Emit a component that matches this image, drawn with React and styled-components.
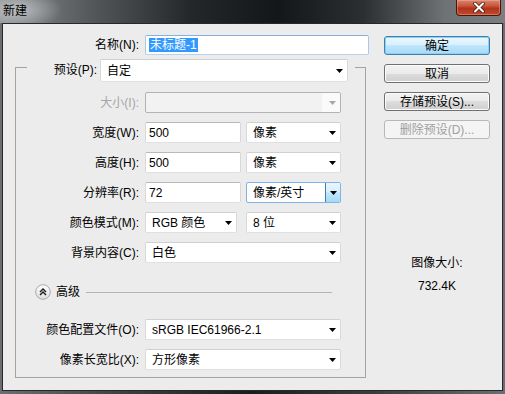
import React from "react";
import styled, { createGlobalStyle } from "styled-components";

const GlobalStyle = createGlobalStyle`
  html, body { margin: 0; padding: 0; background: #1b1e21; }
  body {
    font-family: "Liberation Sans", "Noto Sans CJK SC", sans-serif;
    font-size: 12px;
    color: #000;
  }
`;

const Window = styled.div`
  width: 505px;
  height: 394px;
  display: flex;
  flex-direction: column;
  background: linear-gradient(90deg, #6c6f72 0%, #3c3f42 25%, #1a1d20 50%, #3c3f42 75%, #6c6f72 100%);
`;

const TitleBar = styled.div`
  height: 23px;
  flex-shrink: 0;
  display: flex;
  justify-content: space-between;
  align-items: flex-start;
  background:
    radial-gradient(ellipse 46px 20px at 16px 10px, rgba(200, 202, 204, 0.85), rgba(200, 202, 204, 0) 100%),
    linear-gradient(90deg, #8a8d90 0%, #55585b 18%, #24272a 38%, #14171a 55%, #2c2f32 72%, #6f7275 88%, #7c7f82 100%);
`;

const Title = styled.div`
  margin: 3px 0 0 3px;
  line-height: 14px;
  font-family: "Noto Sans CJK SC", sans-serif;
  color: #000;
`;

const CloseButton = styled.div`
  width: 45px;
  height: 16px;
  margin-right: 4px;
  box-sizing: border-box;
  border: 1px solid #4a1408;
  border-top: none;
  border-radius: 0 0 4px 4px;
  display: flex;
  align-items: center;
  justify-content: center;
  background: linear-gradient(#d8866f 0%, #c9553a 40%, #b0321a 55%, #c24b2e 100%);
  box-shadow: inset 0 0 0 1px rgba(255, 200, 180, 0.35);
`;

const Frame = styled.div`
  flex: 1;
  display: flex;
  padding: 0 2px 3px 2px;
`;

const Client = styled.div`
  flex: 1;
  display: flex;
  border: 1px solid #26292c;
  background: #ececec;
`;

const LeftColumn = styled.div`
  width: 363px;
  flex-shrink: 0;
  box-sizing: border-box;
  padding: 11px 0 0 12px;
  display: flex;
  flex-direction: column;
`;

const Row = styled.div`
  display: flex;
  align-items: center;
  height: 21px;
  flex-shrink: 0;
  margin-top: ${(p) => p.$mt ?? 9}px;
`;

const Label = styled.div`
  width: ${(p) => p.$w}px;
  flex-shrink: 0;
  box-sizing: border-box;
  padding-right: ${(p) => p.$pr ?? 6}px;
  text-align: right;
  white-space: nowrap;
  line-height: 16px;
  color: ${(p) => (p.$disabled ? "#a6a6a6" : "#000")};
`;

const TextBox = styled.div`
  width: ${(p) => p.$w}px;
  height: ${(p) => p.$h ?? 21}px;
  flex-shrink: 0;
  box-sizing: border-box;
  background: #fff;
  border: 1px solid;
  border-color: ${(p) => (p.$focus ? "#86b1dc #a9c8e8 #b7d2ee #a9c8e8" : "#b9b9b9 #d8d8d8 #e0e0e0 #d8d8d8")};
  border-radius: 2px;
  padding-left: 3px;
  display: flex;
  align-items: center;
  white-space: nowrap;
`;

const Selected = styled.span`
  background: #3399ff;
  color: #fff;
  line-height: 14px;
  padding: 0 1px;
`;

const Select = styled.div`
  width: ${(p) => p.$w}px;
  height: 21px;
  flex-shrink: 0;
  box-sizing: border-box;
  background: ${(p) => (p.$disabled ? "#f2f2f2" : "#fff")};
  border: 1px solid;
  border-color: ${(p) =>
    p.$focus ? "#7eb4ea" : p.$disabled ? "#b3b3b3" : "#d0d0d0 #d9d9d9 #e0e0e0 #d9d9d9"};
  border-radius: 2px;
  padding-left: 6px;
  display: flex;
  align-items: center;
  white-space: nowrap;
  overflow: hidden;
`;

const SelectText = styled.span`
  flex: 1;
  line-height: 16px;
`;

const DropZone = styled.div`
  width: ${(p) => (p.$focus ? 15 : 18)}px;
  height: 100%;
  flex-shrink: 0;
  display: flex;
  align-items: center;
  justify-content: center;
  box-sizing: border-box;
  background: ${(p) =>
    p.$focus
      ? "linear-gradient(#eaf6fd 0%, #d7effc 45%, #bde6fd 55%, #a6d9f4 100%)"
      : p.$disabled
      ? "#fafafa"
      : "transparent"};
  border-left: ${(p) => (p.$focus ? "1px solid #3c7fb1" : "none")};
  padding-left: ${(p) => (p.$focus ? 0 : 2)}px;
`;

const GroupBox = styled.div`
  width: 351px;
  box-sizing: border-box;
  margin-top: 12px;
  border: 1px solid #a3a3a3;
  border-top: none;
  padding-bottom: 7px;
  display: flex;
  flex-direction: column;
`;

const PresetRow = styled.div`
  display: flex;
  align-items: flex-start;
  height: 23px;
  margin-top: -8px;
`;

const Corner = styled.div`
  width: ${(p) => p.$w}px;
  flex: ${(p) => (p.$grow ? 1 : "none")};
  margin-top: 8px;
  margin-left: ${(p) => p.$ml ?? 0}px;
  border-top: 1px solid #a3a3a3;
`;

const PresetLabel = styled(Label)`
  line-height: 23px;
`;

const PresetSelect = styled(Select)`
  height: 23px;
`;

const AdvancedRow = styled.div`
  display: flex;
  align-items: center;
  height: 16px;
  margin: 21px 33px 0 19px;
  gap: 5px;
`;

const AdvancedText = styled.span`
  line-height: 16px;
`;

const Rule = styled.div`
  flex: 1;
  height: 0;
  border-top: 1px solid #b4b4b4;
  margin-left: 1px;
`;

const SideColumn = styled.div`
  width: 106px;
  margin-left: 18px;
  padding-top: 12px;
  display: flex;
  flex-direction: column;
  gap: 9px;
`;

const Button = styled.div`
  height: 19px;
  box-sizing: border-box;
  border: 1px solid ${(p) => (p.$default ? "#3c7fb1" : p.$disabled ? "#b5b9bc" : "#707070")};
  border-radius: 3px;
  display: flex;
  align-items: center;
  justify-content: center;
  white-space: nowrap;
  line-height: 16px;
  color: ${(p) => (p.$disabled ? "#a0a0a0" : "#000")};
  background: ${(p) =>
    p.$default
      ? "linear-gradient(#eaf6fd 0%, #d9f0fc 50%, #bee6fd 50%, #a7d9f5 100%)"
      : p.$disabled
      ? "#f4f4f4"
      : "linear-gradient(#f2f2f2 0%, #ebebeb 50%, #dddddd 50%, #cfcfcf 100%)"};
  box-shadow: ${(p) =>
    p.$default ? "inset 0 0 0 1px #8ed0f3" : p.$disabled ? "none" : "inset 0 0 0 1px #fcfcfc"};
`;

const SizeInfo = styled.div`
  margin-top: 107px;
  display: flex;
  flex-direction: column;
  align-items: center;
  gap: 7px;
  line-height: 16px;
`;

function Arrow({ color = "#000" }) {
  return (
    <svg width="7" height="4" viewBox="0 0 7 4">
      <polygon points="0,0 7,0 3.5,4" fill={color} />
    </svg>
  );
}

function Combo({ w, text, focus, disabled }) {
  return (
    <Select $w={w} $focus={focus} $disabled={disabled}>
      <SelectText>{text}</SelectText>
      <DropZone $focus={focus} $disabled={disabled}>
        <Arrow color={disabled ? "#a8a8a8" : "#000"} />
      </DropZone>
    </Select>
  );
}

function CollapseIcon() {
  return (
    <svg width="16" height="16" viewBox="0 0 16 16">
      <defs>
        <linearGradient id="cg" x1="0" y1="0" x2="0" y2="1">
          <stop offset="0" stopColor="#ffffff" />
          <stop offset="1" stopColor="#dcdcdc" />
        </linearGradient>
      </defs>
      <circle cx="8" cy="8" r="7.3" fill="url(#cg)" stroke="#a9a9a9" />
      <path d="M5 8 L8 5 L11 8 M5 11 L8 8 L11 11" fill="none" stroke="#1a1a1a" strokeWidth="1.4" />
    </svg>
  );
}

export default function App() {
  return (
    <>
      <GlobalStyle />
      <Window>
        <TitleBar>
          <Title>新建</Title>
          <CloseButton>
            <svg width="14" height="11" viewBox="0 0 14 11">
              <path d="M3 1.5 L11 9.5 M11 1.5 L3 9.5" stroke="#4a1a10" strokeWidth="3.6" strokeLinecap="round" />
              <path d="M3 1.5 L11 9.5 M11 1.5 L3 9.5" stroke="#ffffff" strokeWidth="2" strokeLinecap="round" />
            </svg>
          </CloseButton>
        </TitleBar>
        <Frame>
          <Client>
            <LeftColumn>
              <Row $mt={0} style={{ height: 20 }}>
                <Label $w={130}>名称(N):</Label>
                <TextBox $w={224} $h={20} $focus>
                  <Selected>未标题-1</Selected>
                </TextBox>
              </Row>

              <GroupBox>
                <PresetRow>
                  <Corner $w={11} />
                  <PresetLabel $w={73} $pr={3}>预设(P):</PresetLabel>
                  <PresetSelect $w={248}>
                    <SelectText>自定</SelectText>
                    <DropZone>
                      <Arrow />
                    </DropZone>
                  </PresetSelect>
                  <Corner $grow $ml={7} />
                </PresetRow>

                <Row $mt={10}>
                  <Label $w={129} $disabled>大小(I):</Label>
                  <Combo w={196} text="" disabled />
                </Row>
                <Row>
                  <Label $w={129}>宽度(W):</Label>
                  <TextBox $w={96}>500</TextBox>
                  <Spacer />
                  <Combo w={95} text="像素" />
                </Row>
                <Row>
                  <Label $w={129}>高度(H):</Label>
                  <TextBox $w={96}>500</TextBox>
                  <Spacer />
                  <Combo w={95} text="像素" />
                </Row>
                <Row>
                  <Label $w={129}>分辨率(R):</Label>
                  <TextBox $w={96}>72</TextBox>
                  <Spacer />
                  <Combo w={95} text="像素/英寸" focus />
                </Row>
                <Row>
                  <Label $w={129}>颜色模式(M):</Label>
                  <Combo w={92} text="RGB 颜色" />
                  <Spacer $w={9} />
                  <Combo w={95} text="8 位" />
                </Row>
                <Row>
                  <Label $w={129}>背景内容(C):</Label>
                  <Combo w={196} text="白色" />
                </Row>

                <AdvancedRow>
                  <CollapseIcon />
                  <AdvancedText>高级</AdvancedText>
                  <Rule />
                </AdvancedRow>

                <Row $mt={19}>
                  <Label $w={129}>颜色配置文件(O):</Label>
                  <Combo w={196} text="sRGB IEC61966-2.1" />
                </Row>
                <Row>
                  <Label $w={129}>像素长宽比(X):</Label>
                  <Combo w={196} text="方形像素" />
                </Row>
              </GroupBox>
            </LeftColumn>

            <SideColumn>
              <Button $default>确定</Button>
              <Button>取消</Button>
              <Button>存储预设(S)...</Button>
              <Button $disabled>删除预设(D)...</Button>
              <SizeInfo>
                <span>图像大小:</span>
                <span>732.4K</span>
              </SizeInfo>
            </SideColumn>
          </Client>
        </Frame>
      </Window>
    </>
  );
}

const Spacer = styled.div`
  width: ${(p) => p.$w ?? 5}px;
  flex-shrink: 0;
`;
